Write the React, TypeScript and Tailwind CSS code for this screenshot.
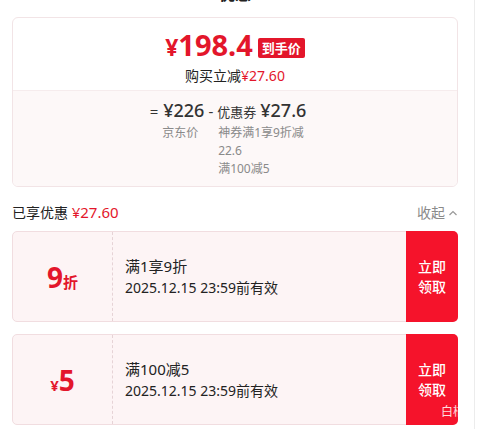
import React from "react";

const font = { fontFamily: '"Noto Sans", "Noto Sans CJK SC", sans-serif' };

type Coupon = { left: React.ReactNode; title: string; until: string; tag?: boolean };

const coupons: Coupon[] = [
  {
    left: (
      <span className="text-[#e3162b] font-bold">
        <span className="text-[28px]">9</span>
        <span className="text-[15px]">折</span>
      </span>
    ),
    title: "满1享9折",
    until: "2025.12.15 23:59前有效",
  },
  {
    left: (
      <span className="text-[#e3162b] font-bold">
        <span className="text-[15px]">¥</span>
        <span className="text-[28px]">5</span>
      </span>
    ),
    title: "满100减5",
    until: "2025.12.15 23:59前有效",
    tag: true,
  },
];

const CouponCard = ({ c }: { c: Coupon }) => (
  <div className="relative flex h-[91px] rounded-[5px] border border-[#f1dde0] bg-[#fdf4f5]">
    {/* value */}
    <div className="w-[100px] shrink-0 flex items-center justify-center border-r border-dashed border-[#e6d3d6]">
      {c.left}
    </div>
    {/* desc */}
    <div className="flex-1 flex flex-col justify-center pl-[12px] text-[#222] leading-[21px]">
      <div className="text-[15px]">{c.title}</div>
      <div className="text-[14px]">{c.until}</div>
    </div>
    {/* button */}
    <div className="w-[52px] shrink-0 -my-px -mr-px rounded-r-[5px] bg-[#f5132b] flex flex-col items-center justify-center text-white text-[14px] font-medium leading-[20px]">
      <span>立即</span>
      <span>领取</span>
    </div>
    {c.tag && (
      <span className="absolute right-[-8px] bottom-[3px] text-[12px] text-white/85 whitespace-nowrap">
        白桔
      </span>
    )}
  </div>
);

export default function App() {
  return (
    <div className="w-[479px] h-[429px] bg-white overflow-hidden flex" style={font}>
      <div className="w-[475px] border-r border-[#ececec] flex flex-col pl-[12px] pr-[16px]">
        {/* TITLE (scrolled away) */}
        <div className="h-[17px] overflow-hidden flex justify-center">
          <div className="-mt-[15px] text-[16px] font-bold text-[#222] leading-[18px]">优惠</div>
        </div>

        {/* PRICE CARD */}
        <div className="rounded-[6px] border border-[#f2e4e6] overflow-hidden">
          <div className="h-[72px] flex flex-col items-center pt-[11px]">
            <div className="flex items-center gap-[5px]">
              <span className="text-[#e3162b] font-bold leading-[31px]">
                <span className="text-[23px]">¥</span>
                <span className="text-[29px]">198.4</span>
              </span>
              <span className="bg-[#e3162b] text-white text-[13px] font-bold px-[4px] leading-[20px] rounded-[2px]">
                到手价
              </span>
            </div>
            <div className="text-[14px] text-[#222] leading-[20px]">
              购买立减<span className="text-[#e3162b]">¥27.60</span>
            </div>
          </div>
          <div className="bg-[#fdf8f8] border-t border-[#f6eced] h-[96px] flex flex-col items-center pt-[6px]">
            <div className="flex items-baseline text-[#333] ml-[-14px]">
              <span className="text-[15px] mr-[5px]">=</span>
              <span className="text-[18px] font-medium">¥226</span>
              <span className="text-[15px] mx-[4px]">-</span>
              <span className="text-[13px]">优惠券</span>
              <span className="text-[18px] font-medium ml-[4px]">¥27.6</span>
            </div>
            <div className="flex gap-[20px] text-[12px] text-[#8a8a8a] leading-[18px] mt-[0px] ml-[-4px]">
              <span>京东价</span>
              <div className="flex flex-col">
                <span>神券满1享9折减</span>
                <span>22.6</span>
                <span>满100减5</span>
              </div>
            </div>
          </div>
        </div>

        {/* SUMMARY ROW */}
        <div className="flex items-center justify-between mt-[15px] h-[21px]">
          <div className="text-[14px] text-[#222]">
            已享优惠 <span className="text-[15px] text-[#e3162b]">¥27.60</span>
          </div>
          <div className="flex items-center gap-[3px] text-[14px] text-[#8a8a8a]">
            收起
            <svg width="10" height="10" viewBox="0 0 10 10" fill="none">
              <path d="M1.5 7 L5 3.5 L8.5 7" stroke="#999" strokeWidth="1.2" />
            </svg>
          </div>
        </div>

        {/* COUPONS */}
        <div className="flex flex-col gap-[12px] mt-[8px]">
          {coupons.map((c, i) => (
            <CouponCard key={i} c={c} />
          ))}
        </div>
      </div>
    </div>
  );
}
